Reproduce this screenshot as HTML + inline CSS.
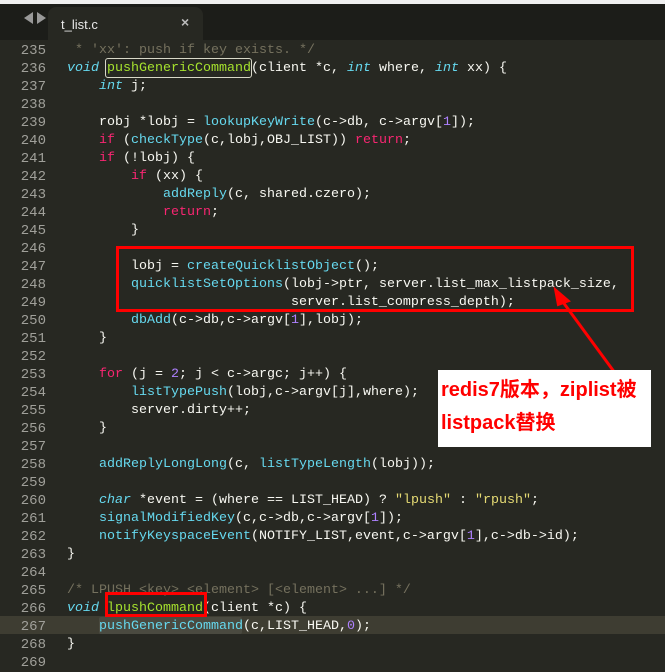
<!DOCTYPE html><html><head><meta charset="utf-8"><style>
body{margin:0;width:665px;height:657px;background:#272822;overflow:hidden;position:relative;font-family:"Liberation Mono",monospace}
#top{position:absolute;left:0;top:0;width:665px;height:4px;background:#f0f0f0}
#bar{position:absolute;left:0;top:4px;width:665px;height:36px;background:#1c1d19}
#tab{position:absolute;left:48px;top:7px;width:155px;height:33px;background:#272822;border-radius:8px 8px 0 0}
#tab span{position:absolute;left:13px;top:10px;color:#e8e8e8;font:13px "Liberation Sans",sans-serif}
#tab i{position:absolute;left:133px;top:7px;color:#bbb;font:bold 14px "Liberation Sans",sans-serif;font-style:normal}
.arr{position:absolute;top:12px;width:0;height:0;border-top:6px solid transparent;border-bottom:6px solid transparent}
.ln{position:absolute;left:0;width:665px;height:18px;font-size:13.33px;line-height:18px;margin-top:2px;color:#f8f8f2;white-space:pre}
.ln b{position:absolute;left:0;width:46px;text-align:right;font-weight:normal;color:#a0a09a;font-size:14px}
.ln u{position:absolute;left:67px;text-decoration:none}
.c{color:#75715e}.k{color:#66d9ef;font-style:italic}.p{color:#f92672}.f{color:#66d9ef}.g{color:#a6e22e}.n{color:#ae81ff}.s{color:#e6db74}
.box{position:absolute;border:3px solid #f00;box-sizing:border-box}
</style></head><body>
<div id="top"></div><div id="bar"></div>
<div class="arr" style="left:24px;border-right:9px solid #999"></div>
<div class="arr" style="left:37px;border-left:9px solid #999"></div>
<div id="tab"><span>t_list.c</span><i>×</i></div>
<div style="position:absolute;left:0;top:616px;width:665px;height:18px;background:#3e3d32"></div>
<div style="position:absolute;left:105px;top:58px;width:145px;height:18px;border:1px solid #d8d8c8;border-radius:3px"></div>
<div style="position:absolute;left:99px;top:617px;width:143px;height:17px;background:#4a4a40;border-radius:2px"></div>

<div class="ln" style="top:40px"><b>235</b><u><span class="c"> * 'xx': push if key exists. */</span></u></div>
<div class="ln" style="top:58px"><b>236</b><u><span class="k">void</span> <span class="g">pushGenericCommand</span>(client *c, <span class="k">int</span> where, <span class="k">int</span> xx) {</u></div>
<div class="ln" style="top:76px"><b>237</b><u>    <span class="k">int</span> j;</u></div>
<div class="ln" style="top:94px"><b>238</b></div>
<div class="ln" style="top:112px"><b>239</b><u>    robj *lobj = <span class="f">lookupKeyWrite</span>(c-&gt;db, c-&gt;argv[<span class="n">1</span>]);</u></div>
<div class="ln" style="top:130px"><b>240</b><u>    <span class="p">if</span> (<span class="f">checkType</span>(c,lobj,OBJ_LIST)) <span class="p">return</span>;</u></div>
<div class="ln" style="top:148px"><b>241</b><u>    <span class="p">if</span> (!lobj) {</u></div>
<div class="ln" style="top:166px"><b>242</b><u>        <span class="p">if</span> (xx) {</u></div>
<div class="ln" style="top:184px"><b>243</b><u>            <span class="f">addReply</span>(c, shared.czero);</u></div>
<div class="ln" style="top:202px"><b>244</b><u>            <span class="p">return</span>;</u></div>
<div class="ln" style="top:220px"><b>245</b><u>        }</u></div>
<div class="ln" style="top:238px"><b>246</b></div>
<div class="ln" style="top:256px"><b>247</b><u>        lobj = <span class="f">createQuicklistObject</span>();</u></div>
<div class="ln" style="top:274px"><b>248</b><u>        <span class="f">quicklistSetOptions</span>(lobj-&gt;ptr, server.list_max_listpack_size,</u></div>
<div class="ln" style="top:292px"><b>249</b><u>                            server.list_compress_depth);</u></div>
<div class="ln" style="top:310px"><b>250</b><u>        <span class="f">dbAdd</span>(c-&gt;db,c-&gt;argv[<span class="n">1</span>],lobj);</u></div>
<div class="ln" style="top:328px"><b>251</b><u>    }</u></div>
<div class="ln" style="top:346px"><b>252</b></div>
<div class="ln" style="top:364px"><b>253</b><u>    <span class="p">for</span> (j = <span class="n">2</span>; j &lt; c-&gt;argc; j++) {</u></div>
<div class="ln" style="top:382px"><b>254</b><u>        <span class="f">listTypePush</span>(lobj,c-&gt;argv[j],where);</u></div>
<div class="ln" style="top:400px"><b>255</b><u>        server.dirty++;</u></div>
<div class="ln" style="top:418px"><b>256</b><u>    }</u></div>
<div class="ln" style="top:436px"><b>257</b></div>
<div class="ln" style="top:454px"><b>258</b><u>    <span class="f">addReplyLongLong</span>(c, <span class="f">listTypeLength</span>(lobj));</u></div>
<div class="ln" style="top:472px"><b>259</b></div>
<div class="ln" style="top:490px"><b>260</b><u>    <span class="k">char</span> *event = (where == LIST_HEAD) ? <span class="s">"lpush"</span> : <span class="s">"rpush"</span>;</u></div>
<div class="ln" style="top:508px"><b>261</b><u>    <span class="f">signalModifiedKey</span>(c,c-&gt;db,c-&gt;argv[<span class="n">1</span>]);</u></div>
<div class="ln" style="top:526px"><b>262</b><u>    <span class="f">notifyKeyspaceEvent</span>(NOTIFY_LIST,event,c-&gt;argv[<span class="n">1</span>],c-&gt;db-&gt;id);</u></div>
<div class="ln" style="top:544px"><b>263</b><u>}</u></div>
<div class="ln" style="top:562px"><b>264</b></div>
<div class="ln" style="top:580px"><b>265</b><u><span class="c">/* LPUSH &lt;key&gt; &lt;element&gt; [&lt;element&gt; ...] */</span></u></div>
<div class="ln" style="top:598px"><b>266</b><u><span class="k">void</span> <span class="g">lpushCommand</span>(client *c) {</u></div>
<div class="ln" style="top:616px"><b>267</b><u>    <span class="f">pushGenericCommand</span>(c,LIST_HEAD,<span class="n">0</span>);</u></div>
<div class="ln" style="top:634px"><b>268</b><u>}</u></div>
<div class="ln" style="top:652px"><b>269</b></div>

<div class="box" style="left:116px;top:246px;width:518px;height:66px"></div>
<div class="box" style="left:105px;top:592px;width:102px;height:25px"></div>
<svg style="position:absolute;left:0;top:0" width="665" height="657"><line x1="615" y1="373" x2="560" y2="298" stroke="#f00" stroke-width="3"/><polygon points="555,289 569,301 558,305" fill="#f00" stroke="#f00" stroke-width="2"/></svg>
<div style="position:absolute;left:438px;top:370px;width:213px;height:77px;background:#fff;color:#f00;font:bold 20px 'Liberation Sans','Noto Sans CJK SC',sans-serif;line-height:33px;padding:4px 0 0 3px;box-sizing:border-box">redis7版本，ziplist被<br>listpack替换</div>
</body></html>
